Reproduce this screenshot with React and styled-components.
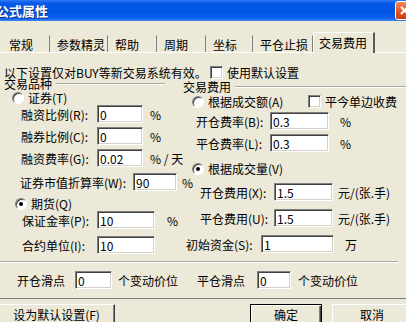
import React from "react";
import styled, { createGlobalStyle } from "styled-components";

const GlobalStyle = createGlobalStyle`
  html, body {
    margin: 0;
    padding: 0;
    background: #ece9d8;
  }
  body {
    font-family: "Noto Sans CJK SC", "Liberation Sans", sans-serif;
    font-size: 12px;
    color: #000;
  }
  * {
    box-sizing: border-box;
  }
`;

const tabs = [
  { label: "常规", width: 48 },
  { label: "参数精灵", width: 58 },
  { label: "帮助", width: 49 },
  { label: "周期", width: 49 },
  { label: "坐标", width: 47 },
  { label: "平仓止损", width: 60 },
  { label: "交易费用", width: 62, active: true },
];

function Radio({ checked, indent, top, children }) {
  return (
    <OptionRow $indent={indent} $top={top}>
      <RadioDot $checked={checked} />
      <OptionText>{children}</OptionText>
    </OptionRow>
  );
}

function Field({ indent, top, label, labelWidth, inputWidth, value, unit, unitGap }) {
  return (
    <FieldRow $indent={indent} $top={top}>
      <FieldLabel $width={labelWidth}>{label}</FieldLabel>
      <TextBox $width={inputWidth} value={value} readOnly />
      {unit && <Unit $gap={unitGap}>{unit}</Unit>}
    </FieldRow>
  );
}

function Slippage({ indent, width, label, labelWidth, inputWidth, unitGap }) {
  return (
    <SlipGroup $indent={indent} $width={width}>
      <FieldLabel $width={labelWidth}>{label}</FieldLabel>
      <TextBox $width={inputWidth} value="0" readOnly />
      <Unit $gap={unitGap}>个变动价位</Unit>
    </SlipGroup>
  );
}

export default function App() {
  return (
    <Window>
      <GlobalStyle />
      <TitleBar>
        <TitleText>公式属性</TitleText>
        <CloseButton>
          <svg width="11" height="11" viewBox="0 0 11 11">
            <path d="M2 2 L9 9 M9 2 L2 9" stroke="#fff" strokeWidth="2" />
          </svg>
        </CloseButton>
      </TitleBar>

      <TabStrip>
        {tabs.map((t) => (
          <Tab key={t.label} $width={t.width} $active={t.active}>
            {t.label}
          </Tab>
        ))}
      </TabStrip>

      <Panel>
        <NoteRow>
          <NoteText>以下设置仅对BUY等新交易系统有效。</NoteText>
          <CheckBox />
          <OptionText>使用默认设置</OptionText>
        </NoteRow>

        <Columns>
          <Column>
            <Legend $top={0} $trim={18}>
              <span>交易品种</span>
            </Legend>
            <Radio indent={8} top={1}>证券(T)</Radio>
            <Field indent={17} top={1} label="融资比例(R):" labelWidth={76} inputWidth={46} value="0" unit="%" unitGap={7} />
            <Field indent={17} top={4} label="融券比例(C):" labelWidth={76} inputWidth={46} value="0" unit="%" unitGap={7} />
            <Field indent={17} top={4} label="融资费率(G):" labelWidth={76} inputWidth={46} value="0.02" unit="% / 天" unitGap={7} />
            <Field indent={16} top={6} label="证券市值折算率(W):" labelWidth={113} inputWidth={44} value="90" unit="%" unitGap={5} />
            <Radio indent={11} top={6} checked>期货(Q)</Radio>
            <Field indent={18} top={1} label="保证金率(P):" labelWidth={75} inputWidth={58} value="10" unit="%" unitGap={12} />
            <Field indent={18} top={7} label="合约单位(I):" labelWidth={75} inputWidth={58} value="10" />
          </Column>

          <Column>
            <Legend $top={3} $trim={0}>
              <span>交易费用</span>
            </Legend>
            <OptionLine>
              <RadioBlock>
                <Radio indent={9} top={0}>根据成交额(A)</Radio>
              </RadioBlock>
              <CheckBox />
              <OptionText>平今单边收费</OptionText>
            </OptionLine>
            <Field indent={13} top={4} label="开仓费率(B):" labelWidth={74} inputWidth={59} value="0.3" unit="%" unitGap={11} />
            <Field indent={13} top={4} label="平仓费率(L):" labelWidth={74} inputWidth={59} value="0.3" unit="%" unitGap={11} />
            <Radio indent={9} top={10} checked>根据成交量(V)</Radio>
            <Field indent={17} top={8} label="开仓费用(X):" labelWidth={74} inputWidth={59} value="1.5" unit="元/(张.手)" unitGap={5} />
            <Field indent={17} top={8} label="平仓费用(U):" labelWidth={74} inputWidth={59} value="1.5" unit="元/(张.手)" unitGap={5} />
            <Field indent={3} top={8} label="初始资金(S):" labelWidth={75} inputWidth={73} value="1" unit="万" unitGap={11} />
          </Column>
        </Columns>

        <Separator />

        <SlipRow>
          <Slippage indent={13} width={193} label="开仓滑点" labelWidth={58} inputWidth={37} unitGap={6} />
          <Slippage indent={0} width={209} label="平仓滑点" labelWidth={60} inputWidth={34} unitGap={7} />
        </SlipRow>
      </Panel>

      <Footer>
        <Button $width={117} $offset={-2}>设为默认设置(F)</Button>
        <Spacer />
        <Button $width={72} $default>确定</Button>
        <Button $width={80} $offset={10}>取消</Button>
      </Footer>
    </Window>
  );
}

const Window = styled.div`
  width: 406px;
  height: 322px;
  overflow: hidden;
  background: #ece9d8;
  display: flex;
  flex-direction: column;
`;

const TitleBar = styled.div`
  flex: none;
  height: 21px;
  display: flex;
  align-items: center;
  justify-content: space-between;
  background: linear-gradient(
    to bottom,
    #2f7cf6 0%,
    #0758e6 15%,
    #0055e5 55%,
    #0a5fef 85%,
    #3b86f5 100%
  );
`;

const TitleText = styled.span`
  margin-left: -4px;
  color: #fff;
  font-size: 13px;
  font-weight: bold;
  line-height: 21px;
  text-shadow: 1px 1px 0 #0a2a8c;
`;

const CloseButton = styled.div`
  width: 21px;
  height: 19px;
  margin-right: -10px;
  border: 1px solid #fff;
  border-radius: 3px;
  background: linear-gradient(to bottom, #f08a62, #e0521f 60%, #c9400f);
  display: flex;
  align-items: center;
  padding-left: 3px;
`;

const TabStrip = styled.div`
  flex: none;
  height: 20px;
  margin-top: 11px;
  padding-left: 2px;
  display: flex;
  align-items: flex-end;
  position: relative;
  z-index: 1;
`;

const Tab = styled.div`
  width: ${(p) => p.$width}px;
  height: ${(p) => (p.$active ? 21 : 17)}px;
  margin-bottom: ${(p) => (p.$active ? -1 : 0)}px;
  padding-left: ${(p) => (p.$active ? 5 : 6)}px;
  padding-bottom: ${(p) => (p.$active ? 2 : 0)}px;
  display: flex;
  align-items: center;
  white-space: nowrap;
  background: #ece9d8;
  border-top: 1px solid ${(p) => (p.$active ? "#fff" : "#ece9d8")};
  border-left: 1px solid ${(p) => (p.$active ? "#fff" : "#ece9d8")};
  border-right: ${(p) => (p.$active ? "2px solid #5a5a5a" : "1px solid #808080")};
`;

const Panel = styled.div`
  flex: none;
  height: 247px;
  padding-left: 4px;
  border-top: 1px solid #fff;
  border-bottom: 1px solid #7d7d7d;
`;

const NoteRow = styled.div`
  margin-top: 13px;
  height: 12px;
  display: flex;
  align-items: center;
  white-space: nowrap;
`;

const NoteText = styled.span`
  width: 206px;
  flex: none;
`;

const Columns = styled.div`
  display: grid;
  grid-template-columns: 179px 1fr;
`;

const Column = styled.div`
  display: flex;
  flex-direction: column;
`;

const Legend = styled.div`
  margin-top: ${(p) => p.$top}px;
  margin-right: ${(p) => p.$trim}px;
  height: 12px;
  line-height: 12px;
  display: flex;
  align-items: center;
  white-space: nowrap;

  &::after {
    content: "";
    flex: 1;
    margin-left: 4px;
    border-top: 1px solid #aca899;
    border-bottom: 1px solid #fff;
  }
`;

const OptionRow = styled.div`
  margin-top: ${(p) => p.$top}px;
  padding-left: ${(p) => p.$indent}px;
  height: 13px;
  display: flex;
  align-items: center;
  white-space: nowrap;
`;

const OptionLine = styled.div`
  margin-top: 2px;
  display: flex;
  align-items: center;
  white-space: nowrap;
`;

const RadioBlock = styled.div`
  width: 125px;
  flex: none;
`;

const OptionText = styled.span`
  margin-left: 4px;
  line-height: 13px;
`;

const RadioDot = styled.span`
  width: 12px;
  height: 12px;
  flex: none;
  border-radius: 50%;
  background: #fff;
  border: 1px solid;
  border-color: #808080 #fff #fff #808080;
  box-shadow: inset 1px 1px 0 #404040;
  position: relative;

  &::after {
    content: "";
    display: ${(p) => (p.$checked ? "block" : "none")};
    position: absolute;
    left: 3px;
    top: 3px;
    width: 4px;
    height: 4px;
    border-radius: 50%;
    background: #000;
  }
`;

const CheckBox = styled.span`
  width: 13px;
  height: 13px;
  flex: none;
  background: #fff;
  border: 1px solid;
  border-color: #808080 #fff #fff #808080;
  box-shadow: inset 1px 1px 0 #404040, inset -1px -1px 0 #d4d0c8;
`;

const FieldRow = styled.div`
  margin-top: ${(p) => p.$top}px;
  padding-left: ${(p) => p.$indent}px;
  height: 18px;
  display: flex;
  align-items: center;
  white-space: nowrap;
`;

const FieldLabel = styled.span`
  width: ${(p) => p.$width}px;
  flex: none;
  white-space: nowrap;
`;

const TextBox = styled.input`
  width: ${(p) => p.$width}px;
  height: 18px;
  flex: none;
  margin: 0;
  padding: 1px 2px 0;
  font: inherit;
  font-size: 12px;
  color: #000;
  background: #fff;
  border: 1px solid;
  border-color: #808080 #fff #fff #808080;
  box-shadow: inset 1px 1px 0 #404040, inset -1px -1px 0 #d4d0c8;
  outline: none;
`;

const Unit = styled.span`
  margin-left: ${(p) => p.$gap}px;
  white-space: nowrap;
`;

const Separator = styled.div`
  margin: 7px 8px 0 -4px;
  border-top: 1px solid #aca899;
  border-bottom: 1px solid #fff;
`;

const SlipRow = styled.div`
  margin-top: 8px;
  display: flex;
`;

const SlipGroup = styled.div`
  width: ${(p) => p.$width}px;
  padding-left: ${(p) => p.$indent}px;
  flex: none;
  height: 18px;
  display: flex;
  align-items: center;
`;

const Footer = styled.div`
  flex: none;
  margin-top: 5px;
  height: 23px;
  display: flex;
`;

const Spacer = styled.div`
  flex: 1;
`;

const Button = styled.div`
  width: ${(p) => p.$width}px;
  margin-left: ${(p) => p.$offset || 0}px;
  margin-right: ${(p) => (p.$offset === 10 ? -6 : 0)}px;
  flex: none;
  height: 23px;
  display: flex;
  align-items: center;
  justify-content: center;
  padding-bottom: 2px;
  white-space: nowrap;
  background: #ece9d8;
  border: 1px solid;
  border-color: ${(p) => (p.$default ? "#000" : "#fff #404040 #404040 #fff")};
  box-shadow: ${(p) =>
    p.$default
      ? "inset 1px 1px 0 #fff, inset -1px -1px 0 #404040, inset -2px -2px 0 #808080"
      : "inset -1px -1px 0 #808080"};
`;
